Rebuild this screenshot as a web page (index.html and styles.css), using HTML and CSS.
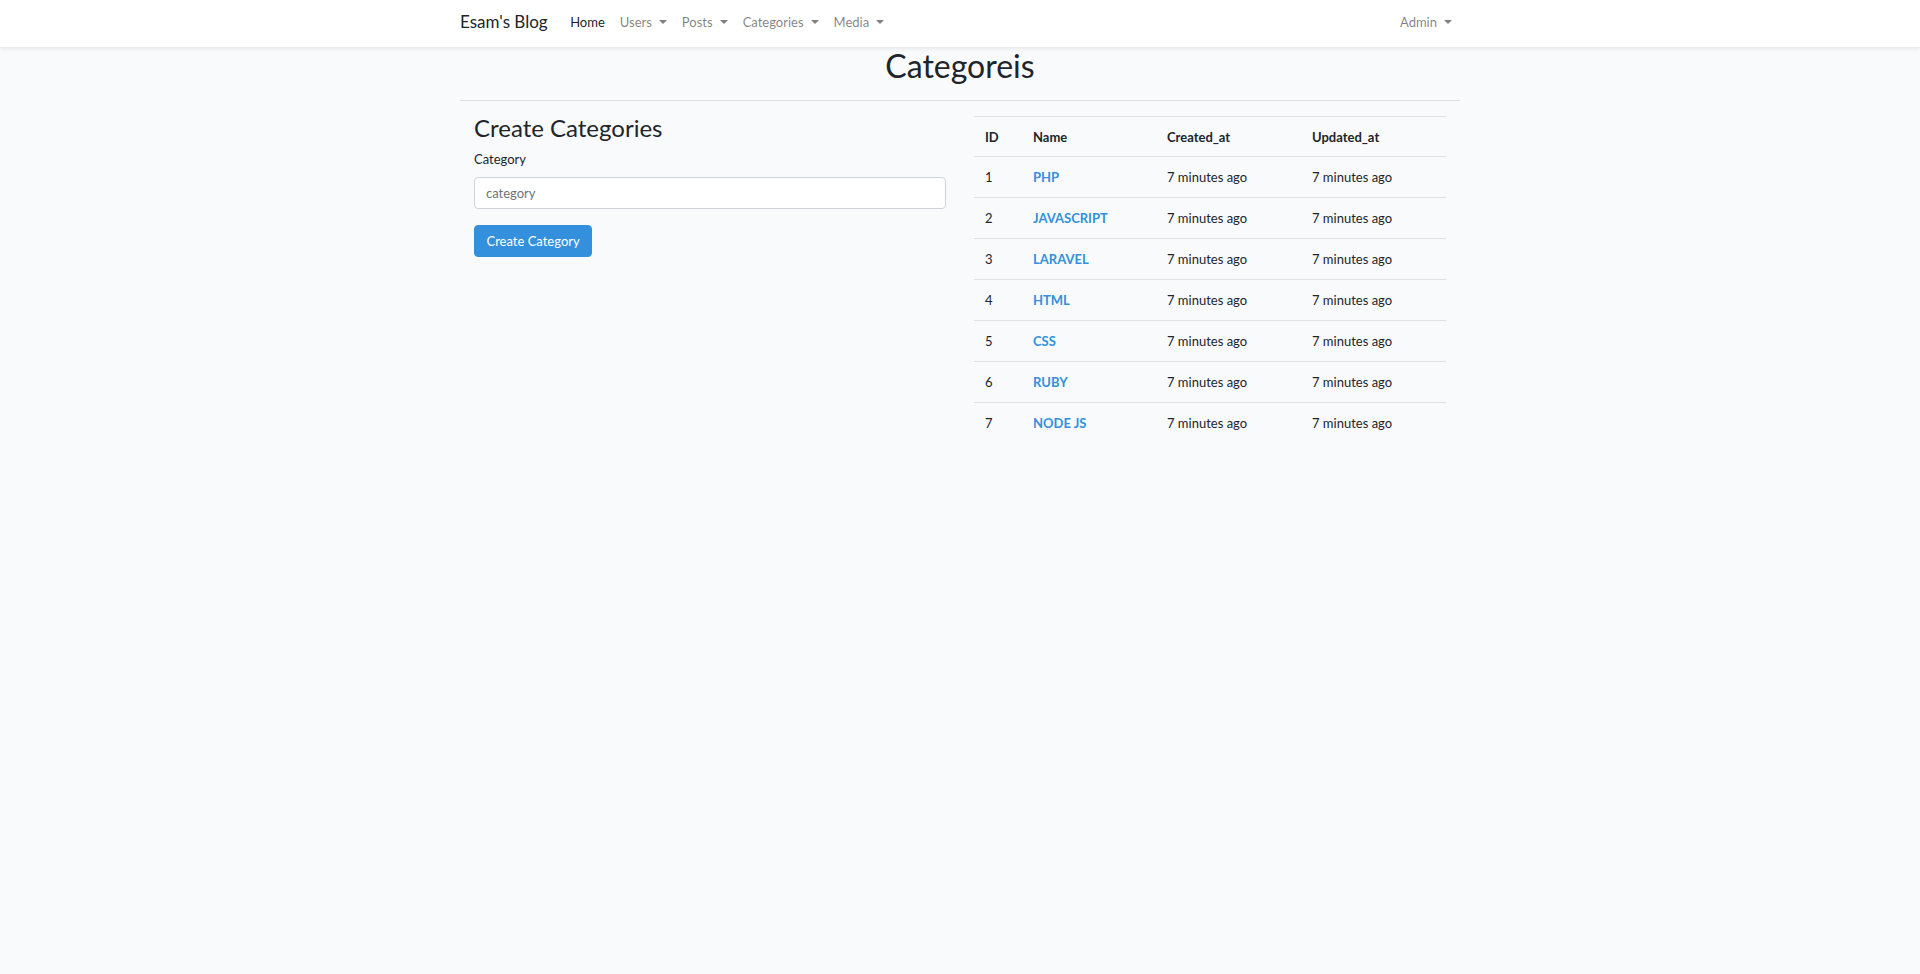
FILE: index.html
```html
<!DOCTYPE html>
<html lang="en">
<head>
<meta charset="utf-8">
<title>Esam's Blog - Categories</title>
<link rel="stylesheet" href="styles.css">
</head>
<body>
<nav class="navbar">
  <div class="nav-container">
    <a class="brand" href="#">Esam's Blog</a>
    <ul class="nav-list">
      <li><a class="nav-link active" href="#">Home</a></li>
      <li><a class="nav-link dropdown" href="#">Users</a></li>
      <li><a class="nav-link dropdown" href="#">Posts</a></li>
      <li><a class="nav-link dropdown" href="#">Categories</a></li>
      <li><a class="nav-link dropdown" href="#">Media</a></li>
    </ul>
    <ul class="nav-list nav-right">
      <li><a class="nav-link dropdown" href="#">Admin</a></li>
    </ul>
  </div>
</nav>

<main class="container">
  <h2 class="page-title">Categoreis</h2>
  <hr class="divider">
  <div class="row">
    <section class="col">
      <h4 class="section-title">Create Categories</h4>
      <form class="form">
        <label class="label" for="category">Category</label>
        <input class="input" id="category" type="text" placeholder="category">
        <button class="btn" type="button">Create Category</button>
      </form>
    </section>
    <section class="col">
      <table class="table">
        <thead>
          <tr><th class="c-id">ID</th><th class="c-name">Name</th><th class="c-date">Created_at</th><th class="c-date">Updated_at</th></tr>
        </thead>
        <tbody>
          <tr><td>1</td><td><a href="#">PHP</a></td><td>7 minutes ago</td><td>7 minutes ago</td></tr>
          <tr><td>2</td><td><a href="#">JAVASCRIPT</a></td><td>7 minutes ago</td><td>7 minutes ago</td></tr>
          <tr><td>3</td><td><a href="#">LARAVEL</a></td><td>7 minutes ago</td><td>7 minutes ago</td></tr>
          <tr><td>4</td><td><a href="#">HTML</a></td><td>7 minutes ago</td><td>7 minutes ago</td></tr>
          <tr><td>5</td><td><a href="#">CSS</a></td><td>7 minutes ago</td><td>7 minutes ago</td></tr>
          <tr><td>6</td><td><a href="#">RUBY</a></td><td>7 minutes ago</td><td>7 minutes ago</td></tr>
          <tr><td>7</td><td><a href="#">NODE JS</a></td><td>7 minutes ago</td><td>7 minutes ago</td></tr>
        </tbody>
      </table>
    </section>
  </div>
</main>
</body>
</html>
```

FILE: styles.css
```css
* { box-sizing: border-box; }

html, body {
  margin: 0;
  padding: 0;
}

body {
  background: #f8fafc;
  color: #212529;
  font-family: Lato, "Open Sans", "Liberation Sans", sans-serif;
  font-size: 13px;
  line-height: 20px;
  min-height: 974px;
}

a { text-decoration: none; }

/* Navbar */
.navbar {
  height: 47px;
  background: #fff;
  box-shadow: 0 2px 4px rgba(0, 0, 0, 0.075);
  position: relative;
  z-index: 1;
}

.nav-container {
  width: 1000px;
  margin: 0 auto;
  height: 100%;
  display: flex;
  align-items: center;
}

.brand {
  color: #212529;
  font-size: 17px;
  line-height: 24px;
  margin-right: 15px;
  padding-bottom: 4px;
}

.nav-list {
  list-style: none;
  margin: 0;
  padding: 0;
  display: flex;
  align-items: center;
}

.nav-right { margin-left: auto; }

.nav-link {
  display: block;
  padding: 0 7.5px 3px;
  color: rgba(0, 0, 0, 0.5);
  font-size: 13px;
  line-height: 20px;
}

.nav-right .nav-link { padding-right: 8px; }

.nav-link.active { color: rgba(0, 0, 0, 0.9); }

.dropdown::after {
  content: "";
  display: inline-block;
  margin-left: 7px;
  vertical-align: 3px;
  border-top: 4px solid;
  border-left: 4px solid transparent;
  border-right: 4px solid transparent;
  border-bottom: 0;
}

/* Content */
.container {
  width: 1000px;
  margin: 0 auto;
}

.page-title {
  margin: 0;
  font-size: 32px;
  font-weight: 400;
  line-height: 38px;
  text-align: center;
}

.divider {
  margin: 15px 0 15px;
  border: 0;
  border-top: 1px solid rgba(0, 0, 0, 0.1);
}

.row {
  display: flex;
}

.col {
  flex: 0 0 500px;
  padding: 0 14px;
}

.section-title {
  margin: 0 0 10px;
  font-size: 24px;
  font-weight: 400;
  line-height: 22px;
  padding-top: 1px;
}

.form {
  display: flex;
  flex-direction: column;
  align-items: flex-start;
}

.label {
  display: block;
  margin-bottom: 8px;
  line-height: 20px;
}

.input {
  width: 100%;
  height: 32px;
  padding: 0 11px;
  font: inherit;
  font-size: 13px;
  color: #495057;
  background: #fff;
  border: 1px solid #ced4da;
  border-radius: 4px;
  margin-bottom: 16px;
}

.input::placeholder { color: #6c757d; }

.btn {
  height: 32px;
  padding: 0 11.5px;
  font: inherit;
  font-size: 13px;
  color: #fff;
  background: #3490dc;
  border: 1px solid #3490dc;
  border-radius: 4px;
}

/* Table */
.table {
  width: 472px;
  border-collapse: collapse;
  table-layout: fixed;
}

.table th,
.table td {
  text-align: left;
  padding: 10px 11px;
  line-height: 20px;
  border-top: 1px solid #dee2e6;
  vertical-align: top;
}

.table th {
  font-weight: 700;
  padding-bottom: 9px;
}

.c-id { width: 48px; }
.c-name { width: 134px; }
.c-date { width: 145px; }

.table td a {
  color: #3490dc;
  font-weight: 700;
}
```
